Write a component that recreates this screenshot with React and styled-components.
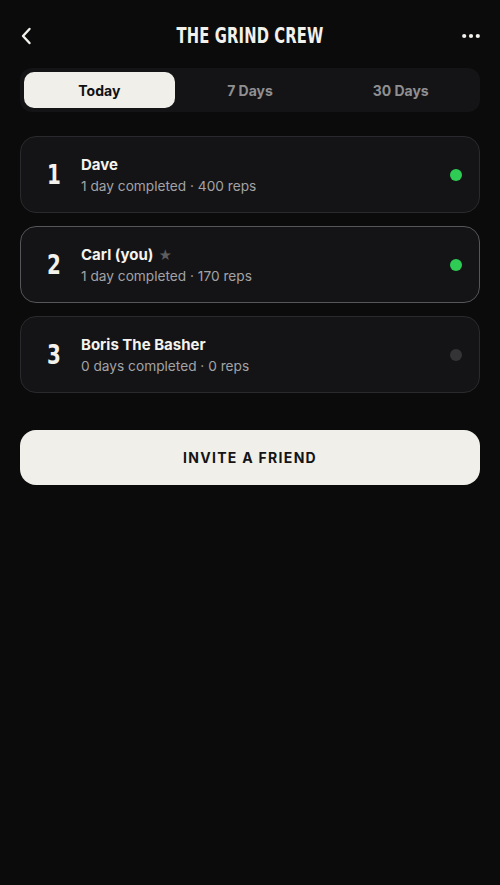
import React from "react";
import styled, { createGlobalStyle } from "styled-components";

const GlobalStyle = createGlobalStyle`
  html, body {
    margin: 0;
    padding: 0;
    background: #0b0b0c;
  }
  body {
    font-family: Inter, "Noto Sans", "Liberation Sans", sans-serif;
    color: #f2f1ec;
  }
`;

const condensed = `"DejaVu Sans Condensed", "Liberation Sans Narrow", "Roboto", sans-serif`;

const Page = styled.div`
  width: 500px;
  min-height: 885px;
  box-sizing: border-box;
  padding: 20px 20px 0;
  background: #0b0b0c;
`;

const Header = styled.header`
  display: grid;
  grid-template-columns: 40px 1fr 40px;
  align-items: center;
  height: 32px;
`;

const IconButton = styled.button`
  border: none;
  background: transparent;
  padding: 0;
  height: 32px;
  display: flex;
  align-items: center;
  justify-content: ${(p) => (p.$end ? "flex-end" : "flex-start")};
  color: #f2f1ec;
  cursor: pointer;
`;

const Title = styled.h1`
  margin: 0;
  text-align: center;
  font-family: ${condensed};
  font-weight: 700;
  font-size: 21px;
  letter-spacing: 0.2px;
  transform: scaleX(0.78);
  color: #f2f1ec;
`;

const Tabs = styled.div`
  margin-top: 16px;
  display: grid;
  grid-template-columns: repeat(3, 1fr);
  padding: 4px;
  border-radius: 12px;
  background: #141416;
`;

const Tab = styled.button`
  border: none;
  height: 36px;
  border-radius: 10px;
  font-family: Inter, "Liberation Sans", sans-serif;
  font-size: 14px;
  font-weight: 700;
  background: ${(p) => (p.$active ? "#f0efea" : "transparent")};
  color: ${(p) => (p.$active ? "#111" : "#8f8f92")};
  cursor: pointer;
`;

const List = styled.div`
  margin-top: 24px;
  display: flex;
  flex-direction: column;
  gap: 13px;
`;

const Card = styled.div`
  height: 77px;
  box-sizing: border-box;
  display: flex;
  align-items: center;
  padding: 0 17px 0 20px;
  border-radius: 16px;
  background: #141416;
  border: 1px solid ${(p) => (p.$you ? "#55555a" : "#2a2a2e")};
`;

const Rank = styled.div`
  width: 26px;
  text-align: center;
  font-family: ${condensed};
  font-weight: 700;
  font-size: 26px;
  transform: scaleX(0.85);
  color: #f2f1ec;
`;

const Info = styled.div`
  flex: 1;
  margin-left: 14px;
  display: flex;
  flex-direction: column;
  gap: 4px;
`;

const Name = styled.div`
  font-size: 15px;
  font-weight: 700;
  color: #f4f3ee;
  display: flex;
  align-items: center;
  gap: 5px;
`;

const Star = styled.span`
  color: #5d5d60;
  font-size: 13px;
`;

const Meta = styled.div`
  font-size: 13.7px;
  color: #a3a3a6;
`;

const Dot = styled.span`
  width: 12px;
  height: 12px;
  border-radius: 50%;
  background: ${(p) => (p.$active ? "#2ecc55" : "#343437")};
`;

const InviteButton = styled.button`
  margin-top: 37px;
  width: 100%;
  height: 55px;
  border: none;
  border-radius: 16px;
  background: #f0efea;
  color: #141414;
  font-family: Inter, "Liberation Sans", sans-serif;
  font-size: 14px;
  font-weight: 700;
  letter-spacing: 1.3px;
  cursor: pointer;
`;

const members = [
  { rank: 1, name: "Dave", meta: "1 day completed · 400 reps", active: true },
  { rank: 2, name: "Carl (you)", meta: "1 day completed · 170 reps", active: true, you: true },
  { rank: 3, name: "Boris The Basher", meta: "0 days completed · 0 reps", active: false },
];

export default function App() {
  return (
    <Page>
      <GlobalStyle />
      <Header>
        <IconButton aria-label="Back">
          <svg width="12" height="18" viewBox="0 0 12 18" fill="none">
            <path d="M9.5 2 L3 9 L9.5 16" stroke="#f2f1ec" strokeWidth="2.4" strokeLinecap="round" strokeLinejoin="round" />
          </svg>
        </IconButton>
        <Title>THE GRIND CREW</Title>
        <IconButton $end aria-label="More">
          <svg width="18" height="6" viewBox="0 0 18 6">
            <circle cx="2.2" cy="3" r="2.1" fill="#f2f1ec" />
            <circle cx="9" cy="3" r="2.1" fill="#f2f1ec" />
            <circle cx="15.8" cy="3" r="2.1" fill="#f2f1ec" />
          </svg>
        </IconButton>
      </Header>

      <Tabs>
        <Tab $active>Today</Tab>
        <Tab>7 Days</Tab>
        <Tab>30 Days</Tab>
      </Tabs>

      <List>
        {members.map((m) => (
          <Card key={m.rank} $you={m.you}>
            <Rank>{m.rank}</Rank>
            <Info>
              <Name>
                {m.name}
                {m.you && <Star>★</Star>}
              </Name>
              <Meta>{m.meta}</Meta>
            </Info>
            <Dot $active={m.active} />
          </Card>
        ))}
      </List>

      <InviteButton>INVITE A FRIEND</InviteButton>
    </Page>
  );
}
